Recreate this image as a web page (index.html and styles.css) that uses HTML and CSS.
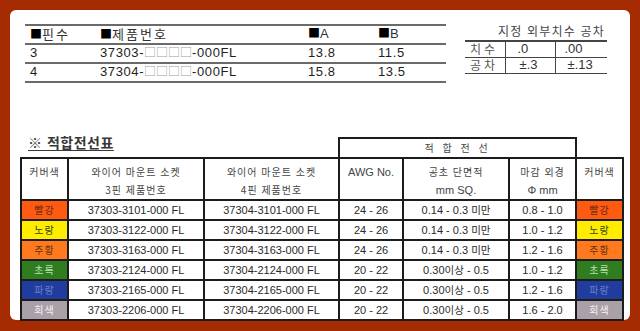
FILE: index.html
```html
<!DOCTYPE html>
<html lang="ko">
<head>
<meta charset="utf-8">
<link rel="stylesheet" href="styles.css">
</head>
<body>
<div class="card">
  <div class="top">
    <table class="spec">
      <colgroup><col class="c1"><col class="c2"><col class="c3"><col class="c4"></colgroup>
      <tr class="hd"><td><span class="sq">■</span>핀수</td><td><span class="sq">■</span>제품번호</td><td><span class="sq">■</span><span class="lat">A</span></td><td><span class="sq">■</span><span class="lat">B</span></td></tr>
      <tr><td>3</td><td>37303-<span class="box">□□□□</span>-000FL</td><td>13.8</td><td>11.5</td></tr>
      <tr><td>4</td><td>37304-<span class="box">□□□□</span>-000FL</td><td>15.8</td><td>13.5</td></tr>
    </table>
    <div class="tol">
      <div class="tol-title">지정 외부치수 공차</div>
      <table class="tol-table">
        <colgroup><col class="t1"><col class="t2"><col class="t3"></colgroup>
        <tr><td class="ko">치수</td><td class="n1">.0</td><td class="n2">.00</td></tr>
        <tr><td class="ko">공차</td><td class="n1b">±.3</td><td class="n2b">±.13</td></tr>
      </table>
    </div>
  </div>

  <table class="wire">
    <colgroup>
      <col class="w1"><col class="w2"><col class="w3"><col class="w4"><col class="w5"><col class="w6"><col class="w7">
    </colgroup>
    <tr class="grp">
      <td colspan="3" class="title"><span>※ 적합전선표</span></td>
      <td colspan="3" class="grp-cell">적 합 전 선</td>
      <td class="blank"></td>
    </tr>
    <tr class="head">
      <td class="top-al">커버색</td>
      <td><div>와이어 마운트 소켓</div><div>3핀 제품번호</div></td>
      <td><div>와이어 마운트 소켓</div><div>4핀 제품번호</div></td>
      <td class="top-al lat">AWG No.</td>
      <td><div>공초 단면적</div><div class="lat">mm SQ.</div></td>
      <td><div>마감 외경</div><div class="lat">Φ mm</div></td>
      <td class="top-al">커버색</td>
    </tr>
    <tr>
      <td class="cc red">빨강</td><td>37303-3101-000 FL</td><td>37304-3101-000 FL</td><td>24 - 26</td><td>0.14 - 0.3 <span class="ko">미만</span></td><td>0.8 - 1.0</td><td class="cc red">빨강</td>
    </tr>
    <tr>
      <td class="cc yellow">노랑</td><td>37303-3122-000 FL</td><td>37304-3122-000 FL</td><td>24 - 26</td><td>0.14 - 0.3 <span class="ko">미만</span></td><td>1.0 - 1.2</td><td class="cc yellow">노랑</td>
    </tr>
    <tr>
      <td class="cc orange">주황</td><td>37303-3163-000 FL</td><td>37304-3163-000 FL</td><td>24 - 26</td><td>0.14 - 0.3 <span class="ko">미만</span></td><td>1.2 - 1.6</td><td class="cc orange">주황</td>
    </tr>
    <tr>
      <td class="cc green">초록</td><td>37303-2124-000 FL</td><td>37304-2124-000 FL</td><td>20 - 22</td><td>0.30<span class="ko">이상</span> - 0.5</td><td>1.0 - 1.2</td><td class="cc green">초록</td>
    </tr>
    <tr>
      <td class="cc blue">파랑</td><td>37303-2165-000 FL</td><td>37304-2165-000 FL</td><td>20 - 22</td><td>0.30<span class="ko">이상</span> - 0.5</td><td>1.2 - 1.6</td><td class="cc blue">파랑</td>
    </tr>
    <tr>
      <td class="cc gray">회색</td><td>37303-2206-000 FL</td><td>37304-2206-000 FL</td><td>20 - 22</td><td>0.30<span class="ko">이상</span> - 0.5</td><td>1.6 - 2.0</td><td class="cc gray">회색</td>
    </tr>
  </table>
</div>
</body>
</html>
```

FILE: styles.css
```css
* { box-sizing: border-box; }
html, body { margin: 0; padding: 0; }
body {
  background: #a42b02;
  padding: 10px 10px 11px 10px;
  font-family: "Liberation Sans", "Noto Sans CJK KR", sans-serif;
  color: #222;
}
.card {
  background: #fff;
  width: 620px;
  height: 310px;
  border-radius: 6px;
  padding: 14px 10px 0 10px;
}
.top {
  display: flex;
  align-items: flex-start;
  margin-left: 5px;
}
.spec {
  width: 421px;
  border-collapse: collapse;
  table-layout: fixed;
  border-top: 2px solid #6a6a6a;
}
.spec .c1 { width: 75px; }
.spec .c2 { width: 208px; }
.spec .c3 { width: 70px; }
.spec .c4 { width: 68px; }
.spec td {
  padding: 0 0 2px 0;
  height: 18px;
  border-bottom: 2px solid #6a6a6a;
  font-size: 13px;
  letter-spacing: 0.6px;
  color: #1e1e1e;
  line-height: 14px;
  white-space: nowrap;
}
.spec td:first-child { padding-left: 5px; }
.spec .hd td {
  height: 19px;
  font-family: "Noto Sans CJK KR", sans-serif;
  font-size: 13px;
  letter-spacing: 2px;
  color: #333;
}
.spec .sq { color: #000; letter-spacing: 0; font-size: 12px; }
.spec .lat { font-family: "Liberation Sans", sans-serif; letter-spacing: 0; font-size: 13px; color: #333; }
.spec .box {
  font-family: "Noto Sans CJK KR", sans-serif;
  font-size: 12px;
  letter-spacing: 0;
  color: #9a9a9a;
}
.tol {
  margin-left: 19px;
  width: 142px;
}
.tol-title {
  font-family: "Noto Sans CJK KR", sans-serif;
  font-size: 12px;
  line-height: 14px;
  letter-spacing: 1.2px;
  color: #444;
  text-align: right;
  padding-right: 2px;
}
.tol-table {
  margin-top: 2px;
  width: 142px;
  border-collapse: collapse;
  table-layout: fixed;
  border-top: 2px solid #444;
}
.tol-table .t1 { width: 40px; }
.tol-table .t2 { width: 50px; }
.tol-table .t3 { width: 52px; }
.tol-table td {
  height: 16px;
  border-bottom: 1.5px solid #444;
  font-size: 13px;
  line-height: 14px;
  padding: 0;
  color: #333;
}
.tol-table td + td { border-left: 1.5px solid #444; }
.tol-table .ko {
  font-family: "Noto Sans CJK KR", sans-serif;
  font-size: 12px;
  letter-spacing: 3px;
  padding-left: 5px;
  color: #555;
}
.tol-table .n1 { padding-left: 12px; }
.tol-table .n2 { padding-left: 9px; }
.tol-table .n1b { padding-left: 14px; }
.tol-table .n2b { padding-left: 12px; }

.wire {
  margin-top: 54px;
  width: 602px;
  border-collapse: collapse;
  table-layout: fixed;
}
.wire .w1 { width: 47px; }
.wire .w2 { width: 136px; }
.wire .w3 { width: 135px; }
.wire .w4 { width: 64px; }
.wire .w5 { width: 106px; }
.wire .w6 { width: 67px; }
.wire .w7 { width: 47px; }
.wire td {
  border: 2px solid #1c1c1c;
  height: 20px;
  padding: 0;
  text-align: center;
  font-size: 11px;
  line-height: 14px;
  color: #2a2a2a;
  white-space: nowrap;
}
.wire tr + tr + tr td { border-top-width: 1.5px; border-top-color: #2a2a3a; }
.wire .grp td { height: 20px; }
.wire .title {
  border: none;
  border-bottom: 2px solid #1c1c1c;
  text-align: left;
  vertical-align: top;
  padding-left: 7px;
  line-height: 8px;
}
.wire .title span {
  font-family: "Noto Sans CJK KR", sans-serif;
  font-size: 14px;
  font-weight: bold;
  color: #383838;
  text-decoration: underline;
  text-decoration-thickness: 1px;
  text-underline-offset: 2px;
  letter-spacing: 0.5px;
}
.wire .grp-cell {
  font-family: "Noto Sans CJK KR", sans-serif;
  font-size: 10px;
  letter-spacing: 3px;
  color: #444;
}
.wire .blank { border: none; border-bottom: 2px solid #1c1c1c; }
.wire .head td {
  height: 40px;
  vertical-align: top;
  padding-top: 4px;
  font-family: "Noto Sans CJK KR", sans-serif;
  font-size: 10px;
  letter-spacing: 1px;
  line-height: 18px;
  color: #444;
}
.wire .head .lat,
.wire .head div.lat {
  font-family: "Liberation Sans", sans-serif;
  font-size: 11px;
  letter-spacing: 0;
}
.wire .ko {
  font-family: "Noto Sans CJK KR", sans-serif;
  font-size: 10.5px;
}
.wire .cc {
  font-family: "Noto Sans CJK KR", sans-serif;
  font-size: 10px;
  letter-spacing: 1px;
}
.wire .red { background: #ff5a12; color: #6a2a10; }
.wire .yellow { background: #ffec00; color: #2a4a10; }
.wire .orange { background: #ff7a1e; color: #6a3010; }
.wire .green { background: #2f7d1f; color: #b8e0b0; }
.wire .blue { background: #1f3c9e; color: #6a80c8; }
.wire .gray { background: #aaa0a8; color: #f4f0f4; }
```
